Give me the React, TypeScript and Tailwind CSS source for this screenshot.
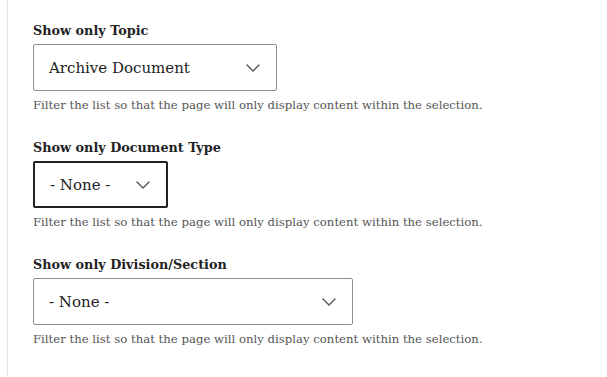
import React from "react";

const Chevron = () => (
  <svg width="14" height="8" viewBox="0 0 14 8" fill="none" className="shrink-0">
    <path d="M1 1 L7 7 L13 1" stroke="#555" strokeWidth="1.4" strokeLinecap="round" strokeLinejoin="round" />
  </svg>
);

type Props = { label: string; value: string; width: string; focused?: boolean; mt: string };

function Field({ label, value, width, focused, mt }: Props) {
  return (
    <div className={mt}>
      <div className="text-[12.8px] leading-[18px] font-bold text-[#222]">{label}</div>
      <div
        className={
          "mt-[4px] h-[47px] flex items-center justify-between rounded-[2px] pl-[15px] pr-[16px] bg-white " +
          width +
          (focused ? " border-2 border-[#222]" : " border border-[#8e8e8e]")
        }
      >
        <span className="text-[15px] leading-[20px] text-[#222]">{value}</span>
        <Chevron />
      </div>
      <div className="mt-[6px] text-[11.7px] leading-[16px] text-[#555]">
        Filter the list so that the page will only display content within the selection.
      </div>
    </div>
  );
}

export default function App() {
  return (
    <div className="w-[607px] h-[377px] bg-white overflow-hidden" style={{ fontFamily: '"DejaVu Serif", serif' }}>
      <div className="ml-[7px] h-full border-l border-[#e6e6e6] pl-[25px] pt-[22px]">
        <Field label="Show only Topic" value="Archive Document" width="w-[244px]" mt="" />
        <Field label="Show only Document Type" value="- None -" width="w-[135px]" focused mt="mt-[26px]" />
        <Field label="Show only Division/Section" value="- None -" width="w-[320px]" mt="mt-[26px]" />
      </div>
    </div>
  );
}
